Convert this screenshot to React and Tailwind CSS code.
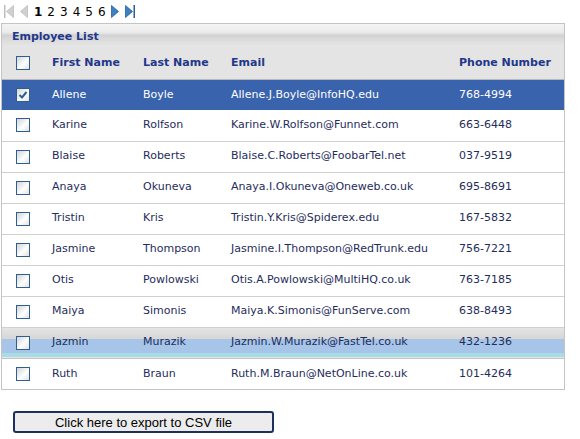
import React, { useState } from 'react';

const employees = [
  ['Allene', 'Boyle', 'Allene.J.Boyle@InfoHQ.edu', '768-4994'],
  ['Karine', 'Rolfson', 'Karine.W.Rolfson@Funnet.com', '663-6448'],
  ['Blaise', 'Roberts', 'Blaise.C.Roberts@FoobarTel.net', '037-9519'],
  ['Anaya', 'Okuneva', 'Anaya.I.Okuneva@Oneweb.co.uk', '695-8691'],
  ['Tristin', 'Kris', 'Tristin.Y.Kris@Spiderex.edu', '167-5832'],
  ['Jasmine', 'Thompson', 'Jasmine.I.Thompson@RedTrunk.edu', '756-7221'],
  ['Otis', 'Powlowski', 'Otis.A.Powlowski@MultiHQ.co.uk', '763-7185'],
  ['Maiya', 'Simonis', 'Maiya.K.Simonis@FunServe.com', '638-8493'],
  ['Jazmin', 'Murazik', 'Jazmin.W.Murazik@FastTel.co.uk', '432-1236'],
  ['Ruth', 'Braun', 'Ruth.M.Braun@NetOnLine.co.uk', '101-4264'],
];

const CheckBox = ({ checked }) => (
  <span className="flex h-[14px] w-[14px] items-center justify-center border border-[#2d5f93] bg-[linear-gradient(135deg,#d4d4d4_0%,#f4f4f4_45%,#ffffff_55%,#e2e2e2_100%)]">
    {checked && (
      <svg width="10" height="10" viewBox="0 0 10 10">
        <path d="M1.5 5 L4 7.5 L8.5 2" fill="none" stroke="#2d5f93" strokeWidth="2" />
      </svg>
    )}
  </span>
);

const PagerArrow = ({ dir, bar, active }) => {
  const fill = active ? '#3b82c4' : '#d0d0d0';
  const stroke = active ? '#2a5f94' : '#bdbdbd';
  return (
    <svg width="10" height="13" viewBox="0 0 10 13">
      {dir === 'left' ? (
        <>
          {bar && <rect x="0" y="0" width="1.5" height="13" fill={stroke} />}
          <path d="M9.5 0.5 L2.5 6.5 L9.5 12.5 Z" fill={fill} stroke={stroke} strokeWidth="0.8" />
        </>
      ) : (
        <>
          <path d="M0.5 0.5 L7.5 6.5 L0.5 12.5 Z" fill={fill} stroke={stroke} strokeWidth="0.8" />
          {bar && <rect x="8.5" y="0" width="1.5" height="13" fill={stroke} />}
        </>
      )}
    </svg>
  );
};

export default function App() {
  const [selected, setSelected] = useState(0);
  const hovered = 8;

  return (
    <div className="h-[439px] w-[580px] bg-white font-['DejaVu_Sans',sans-serif] text-[11px]">
      <div className="flex h-[23px] items-center pl-[4px] text-[12px] text-black">
        <PagerArrow dir="left" bar />
        <span className="ml-[4px]" />
        <PagerArrow dir="left" />
        <span className="ml-[6px] font-bold">1</span>
        {[2, 3, 4, 5, 6].map((n) => (
          <span key={n} className="ml-[5px]">{n}</span>
        ))}
        <span className="ml-[5px]" />
        <PagerArrow dir="right" active />
        <span className="ml-[4px]" />
        <PagerArrow dir="right" bar active />
      </div>

      <div className="ml-[1px] w-[564px] border border-[#c4c4c4]">
        <div className="flex h-[23px] items-center bg-[linear-gradient(#f4f4f4_0%,#ececec_35%,#d2d2d2_50%,#dcdcdc_70%,#e6e6e6_100%)] pl-[10px] pt-[3px] font-bold text-[#22378a]">
          Employee List
        </div>
        <table className="w-full border-collapse text-left">
          <colgroup>
            <col className="w-[38px]" />
            <col className="w-[91px]" />
            <col className="w-[88px]" />
            <col className="w-[228px]" />
            <col />
          </colgroup>
          <thead>
            <tr className="h-[32px] border-b border-[#b8b8b8] bg-[#e4e4e4] font-bold text-[#22378a]">
              <th className="pl-[14px]"><CheckBox /></th>
              <th className="pl-[12px]">First Name</th>
              <th className="pl-[12px]">Last Name</th>
              <th className="pl-[12px]">Email</th>
              <th className="pl-[12px]">Phone Number</th>
            </tr>
          </thead>
          <tbody>
            {employees.map((emp, i) => {
              const isSel = i === selected;
              const isHover = i === hovered && !isSel;
              let rowCls = 'bg-white text-[#1f2d5c] border-b border-[#d0d0d0]';
              if (isSel) rowCls = 'bg-[#3a63ae] text-white';
              if (isHover)
                rowCls =
                  'bg-[linear-gradient(#e6e6e6_0%,#d6d6d6_40%,#a6c5e8_40%,#a6c5e8_87%,#a8dde6_87%)] text-[#1f2d5c] border-b border-[#c4c4c4]';
              return (
                <tr
                  key={emp[2]}
                  className={`h-[31px] cursor-pointer last:border-b-0 ${rowCls}`}
                  onClick={() => setSelected(i)}
                >
                  <td className="pl-[14px]"><CheckBox checked={isSel} /></td>
                  {emp.map((val) => (
                    <td key={val} className="pl-[12px]">{val}</td>
                  ))}
                </tr>
              );
            })}
          </tbody>
        </table>
      </div>

      <button
        type="button"
        className="ml-[13px] mt-[21px] h-[22px] w-[261px] rounded-[3px] border-2 border-[#1c2f5f] bg-[#ececec] font-['Liberation_Sans',sans-serif] text-[13px] leading-none text-black"
      >
        Click here to export to CSV file
      </button>
    </div>
  );
}
